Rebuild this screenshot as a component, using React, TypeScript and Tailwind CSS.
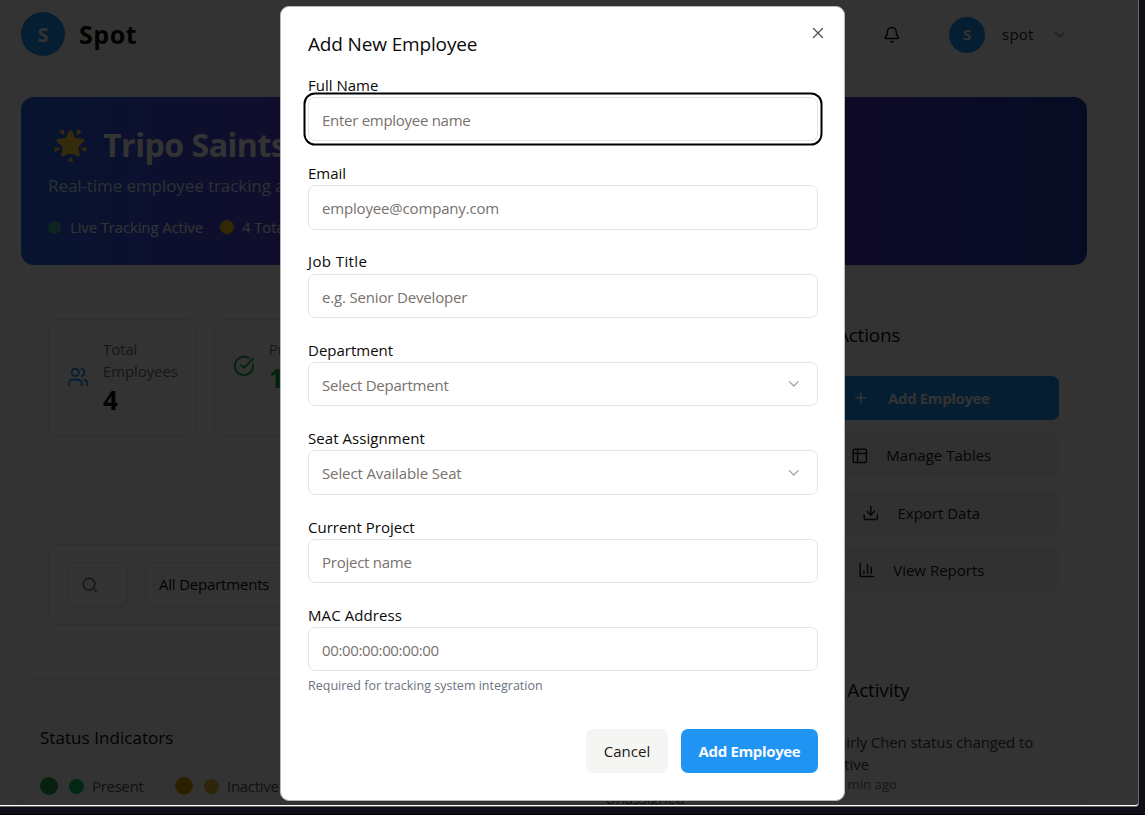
import type { ReactNode } from "react";
import { Bell, ChevronDown, CircleCheckBig, Search, Users, Plus, Table2, Download, X } from "lucide-react";

function GlowingStar() {
  return (
    <svg viewBox="0 0 36 36" className="h-[35px] w-[35px]" fill="#fcd53f">
      <path
        d="M18 3.5 22 11.4 30.8 12.8 24.6 19.2 26 28 18 24.2 10 28 11.4 19.2 5.2 12.8 14 11.4Z"
        stroke="#fcd53f"
        strokeWidth="3"
        strokeLinejoin="round"
      />
      <path
        d="M7.5 3.5 10.5 2.5 11 6.5ZM28.5 3.5 25.5 2.5 25 6.5ZM2.3 20.5 2.6 23.8 6.5 21ZM33.7 20.5 33.4 23.8 29.5 21ZM18 30.5 16.2 33.8 19.8 33.8Z"
        stroke="#fcd53f"
        strokeWidth="1.6"
        strokeLinejoin="round"
      />
    </svg>
  );
}

function Chart({ className }: { className?: string }) {
  return (
    <svg viewBox="0 0 24 24" className={className} fill="none" stroke="currentColor" strokeWidth="2" strokeLinecap="round" strokeLinejoin="round">
      <path d="M3 3v18h18M8 17v-3M13 17V5M18 17V9" />
    </svg>
  );
}

function Header() {
  return (
    <header className="flex h-[71px] shrink-0 items-center justify-between border-b border-[#e9e8e7] bg-white pr-[53px] pb-[3px] pl-[21px]">
      <div className="flex items-center">
        <div className="flex h-11 w-11 items-center justify-center rounded-full bg-[#2094f3] pt-0.5 text-[20px] font-bold text-white">S</div>
        <span className="ml-3.5 pt-[3px] text-[25px] font-bold tracking-[0.6px] text-[#0c0a09]">Spot</span>
      </div>
      <div className="flex items-center pt-0.5">
        <Bell className="h-[17.6px] w-[17.6px] text-[#0c0a09]" />
        <div className="ml-[49px] flex h-9 w-9 items-center justify-center rounded-full bg-[#2094f3] text-[15px] font-bold text-white">S</div>
        <span className="ml-[17px] text-[15px] font-medium tracking-[0.15px] text-[#292524]">spot</span>
        <ChevronDown className="ml-[18px] h-[17.6px] w-[17.6px] text-[#a8a29e]" />
      </div>
    </header>
  );
}

function Banner() {
  return (
    <section className="h-[168px] shrink-0 rounded-[13px] bg-[linear-gradient(to_right,#2563eb,#7e22ce,#1e40af)] px-[27px] pt-[26px] text-white">
      <div className="flex h-[44px] items-center whitespace-nowrap">
        <div className="ml-[5px] w-[50px]"><GlowingStar /></div>
        <h1 className="text-[32px] font-bold tracking-[-0.45px]">Tripo Saints</h1>
      </div>
      <p className="mt-[5px] text-[17px] leading-[28px] tracking-[-0.08px] text-[#dbeafe]">Real-time employee tracking and seat management</p>
      <div className="mt-[16px] flex items-center text-[15px] leading-[22px] tracking-[-0.15px]">
        <span className="h-[13px] w-[13px] rounded-full bg-[#4ade80]/70" />
        <span className="ml-[9px] w-[150px] whitespace-nowrap">Live Tracking Active</span>
        <span className="h-[14px] w-[14px] rounded-full bg-[#facc15]" />
        <span className="ml-2">4 Total Employees</span>
      </div>
    </section>
  );
}

const card = "rounded-[13px] border border-[#eaeae9] bg-white";

function Stat({ icon, label, value, color }: { icon: ReactNode; label: string; value: string; color: string }) {
  return (
    <div className="flex h-[117px] items-start rounded-[9px] border border-[#e7e5e4] pt-[18px] pl-[18px]">
      {icon}
      <div className="ml-[14px] text-[15px] leading-[22px] font-medium tracking-[-0.1px] text-[#78716c]">
        <div className="w-[80px]">{label}</div>
        <div className={`text-[26px] leading-[37px] font-bold ${color}`}>{value}</div>
      </div>
    </div>
  );
}

function Dots({ a, b, label, wide }: { a: string; b: string; label: string; wide?: boolean }) {
  return (
    <div className={`flex items-center ${wide ? "w-[140px]" : "w-[135px]"}`}>
      <span className={`h-[18px] w-[18px] rounded-full ${a}`} />
      <span className={`ml-[11px] h-[15px] w-[15px] rounded-full ${b}`} />
      <span className="ml-2 text-[15px] tracking-[-0.3px] text-[#57534e]">{label}</span>
    </div>
  );
}

function LeftColumn() {
  return (
    <div className="w-[700px] shrink-0">
      <section className={`h-[200px] px-[26px] pt-[27px] ${card}`}>
        <div className="grid grid-cols-4 gap-[17px]">
          <Stat icon={<Users className="mt-[28px] h-[22px] w-[22px] text-[#2094f3]" />} label="Total Employees" value="4" color="text-[#0c0a09]" />
          <Stat icon={<CircleCheckBig className="mt-[17px] h-[22px] w-[22px] text-[#16a34a]" />} label="Present" value="1" color="text-[#16a34a]" />
          <Stat icon={<Users className="mt-[17px] h-[22px] w-[22px]" />} label="Inactive" value="2" color="text-[#ca8a04]" />
          <Stat icon={<Users className="mt-[17px] h-[22px] w-[22px]" />} label="Absent" value="1" color="text-[#dc2626]" />
        </div>
      </section>
      <section className={`mt-[25px] h-[164px] px-[26px] pt-[27px] ${card}`}>
        <div className="flex h-[81px] items-center rounded-[9px] border border-[#e7e5e4] px-[18px]">
          <div className="flex h-[45px] w-[61px] items-center rounded-[7px] border border-[#e4e2e0] pl-[13px]">
            <Search className="h-[17.6px] w-[17.6px] text-[#78716c]" />
          </div>
          <div className="ml-[17px] flex h-[45px] w-[200px] items-center rounded-[7px] border border-[#e4e2e0] pl-[13px] text-[15px] tracking-[-0.2px] text-[#0c0a09]">
            All Departments
          </div>
        </div>
      </section>
      <section className={`mt-[26px] h-[200px] px-[18px] pt-[18px] ${card}`}>
        <h3 className="text-[17px] leading-[26px] font-medium tracking-[0.05px] text-[#0c0a09]">Status Indicators</h3>
        <div className="mt-[24px] flex h-[22px]">
          <Dots a="bg-[#22a34f]" b="bg-[#00c562]" label="Present" />
          <Dots a="bg-[#d6a400]" b="bg-[#e6b83c]" label="Inactive" />
          <Dots a="bg-[#ef4444]" b="bg-[#ef4444]" label="Absent" wide />
        </div>
        <p className="-mt-[10px] ml-[565px] text-[15px] leading-[22px] tracking-[-0.2px] text-[#57534e]">Unassigned</p>
      </section>
    </div>
  );
}

function Action({ icon, label, primary }: { icon: ReactNode; label: string; primary?: boolean }) {
  return (
    <div className={`flex h-11 items-center justify-center rounded-[7px] text-[15px] ${primary ? "bg-[#2094f3] font-bold tracking-[-0.38px] text-white" : "bg-[#f5f5f4] text-[#1c1917]"}`}>
      {icon}
      <span className="ml-[18px]">{label}</span>
    </div>
  );
}

function RightColumn() {
  const icon = "h-[17.6px] w-[17.6px]";
  return (
    <div className="w-[332px]">
      <section className={`h-[330px] px-[27px] pt-[29px] ${card}`}>
        <h3 className="text-[19px] leading-[28px] font-medium tracking-[-0.22px] text-[#0c0a09]">Quick Actions</h3>
        <div className="mt-[27px] grid gap-[13.4px]">
          <Action primary icon={<Plus className={icon} />} label="Add Employee" />
          <Action icon={<Table2 className={icon} />} label="Manage Tables" />
          <Action icon={<Download className={icon} />} label="Export Data" />
          <Action icon={<Chart className={icon} />} label="View Reports" />
        </div>
      </section>
      <section className={`mt-[25px] h-[240px] px-[27px] pt-[29px] ${card}`}>
        <h3 className="text-[19px] leading-[28px] font-medium tracking-[-0.17px] text-[#0c0a09]">Recent Activity</h3>
        <div className="mt-[27px] pl-[46px] text-[15px] leading-[22px] tracking-[-0.1px] whitespace-nowrap text-[#44403c]">
          <p>Shirly Chen status changed to</p>
          <p>active</p>
          <p className="text-[13px] leading-[18px] tracking-[0.1px] text-[#6b7280]">12 min ago</p>
        </div>
      </section>
    </div>
  );
}

function Field({ label, placeholder, select, focus, lt = "", pt = "" }: { label: string; placeholder: string; select?: boolean; focus?: boolean; lt?: string; pt?: string }) {
  return (
    <div className="h-[88.35px]">
      <div className={`h-[22.2px] text-[15px] leading-[21px] font-medium text-[#0c0a09] ${lt}`}>{label}</div>
      <div className={`flex h-[44.3px] items-center justify-between rounded-[7px] border border-[#e7e5e4] bg-white pr-[14px] pl-[13px] text-[15px] text-[#78716c] ${focus ? "ring-2 ring-black ring-offset-[2.5px] ring-offset-white" : ""}`}>
        <span className={`pt-0.5 ${pt}`}>{placeholder}</span>
        {select && <ChevronDown className="h-[17.6px] w-[17.6px] text-[#a8a29e]" strokeWidth={1.8} />}
      </div>
    </div>
  );
}

function Modal() {
  return (
    <div className="absolute top-[6px] left-[280px] h-[795px] w-[565px] rounded-[9px] border border-[#b8b8b8] bg-white pt-[23px] pr-[26px] pl-[27px] whitespace-nowrap">
      <X className="absolute top-[17px] right-[17px] h-[18px] w-[18px] text-[#57534e]" strokeWidth={1.8} />
      <h2 className="h-[44.8px] text-[19px] leading-[28px] font-medium tracking-[-0.15px] text-[#0c0a09]">Add New Employee</h2>
      <Field label="Full Name" placeholder="Enter employee name" focus pt="tracking-[-0.28px]" />
      <Field label="Email" placeholder="employee@company.com" pt="tracking-[-0.17px]" />
      <Field label="Job Title" placeholder="e.g. Senior Developer" lt="tracking-[0.4px]" pt="tracking-[-0.17px]" />
      <Field label="Department" placeholder="Select Department" select pt="tracking-[-0.23px]" />
      <Field label="Seat Assignment" placeholder="Select Available Seat" select lt="tracking-[0.06px]" pt="tracking-[-0.12px]" />
      <Field label="Current Project" placeholder="Project name" pt="tracking-[-0.25px]" />
      <Field label="MAC Address" placeholder="00:00:00:00:00:00" lt="tracking-[0.1px]" pt="tracking-[-0.35px]" />
      <p className="-mt-[16.6px] text-[12.5px] leading-[18px] text-[#6b7280]">Required for tracking system integration</p>
      <div className="mt-[34px] flex h-11 justify-end gap-[13px] text-[15px]">
        <button className="w-[82px] rounded-[7px] bg-[#f5f5f4] pt-0.5 font-medium text-[#1c1917]">Cancel</button>
        <button className="w-[137px] rounded-[7px] bg-[#2094f3] pt-0.5 font-bold tracking-[-0.35px] text-[#f8fafc]">Add Employee</button>
      </div>
    </div>
  );
}

export default function App() {
  return (
    <div className="h-[815px] w-[1145px] overflow-hidden border-b border-black bg-[#0d0e18] font-['Open_Sans','Noto_Sans',sans-serif]">
      <div className="relative h-[806px] w-[1139px] overflow-hidden rounded-br-[4px] border-r border-b border-r-[#6b6b6b] border-b-white bg-[#fcfcfc] shadow-[0_1px_0_#666]">
        <div className="flex h-[806px] w-[1122px] flex-col">
          <Header />
          <main className="flex flex-col pt-[26px] pr-[35px] pl-[21px]">
            <Banner />
            <div className="mt-[26px] flex gap-[34px]">
              <LeftColumn />
              <RightColumn />
            </div>
          </main>
        </div>
        <div className="absolute inset-0 bg-black/80" />
        <Modal />
      </div>
    </div>
  );
}
